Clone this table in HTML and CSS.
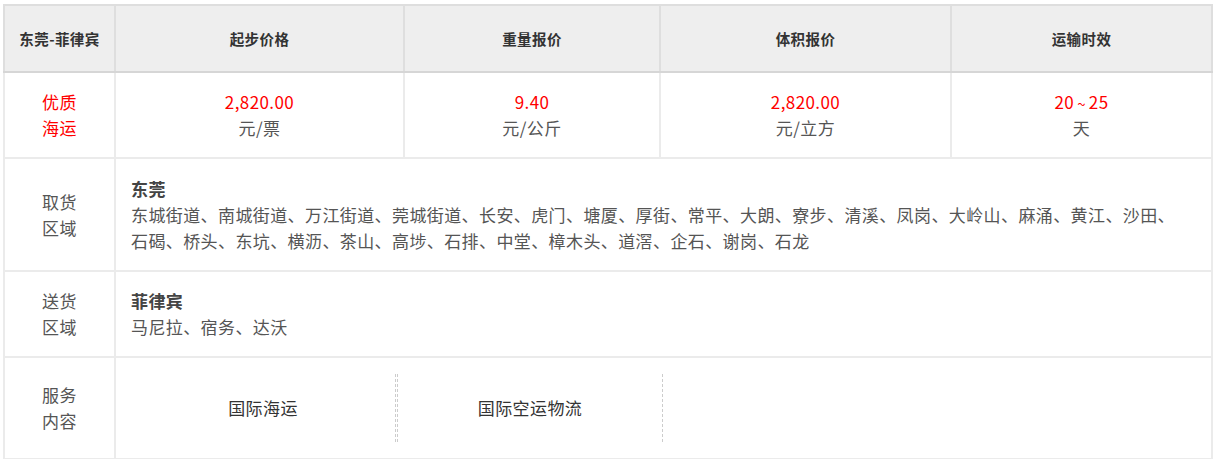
FILE: index.html
```html
<!DOCTYPE html>
<html lang="zh-CN">
<head>
<meta charset="utf-8">
<title>东莞-菲律宾</title>
<link rel="stylesheet" href="styles.css">
</head>
<body>
<table class="price-table">
  <colgroup>
    <col class="c1"><col class="c2"><col class="c3"><col class="c4"><col class="c5">
  </colgroup>
  <thead>
    <tr class="head-row">
      <th>东莞-菲律宾</th>
      <th>起步价格</th>
      <th>重量报价</th>
      <th>体积报价</th>
      <th>运输时效</th>
    </tr>
  </thead>
  <tbody>
    <tr class="price-row">
      <td class="label red">优质<br>海运</td>
      <td class="val"><span class="red">2,820.00</span><br>元/票</td>
      <td class="val"><span class="red">9.40</span><br>元/公斤</td>
      <td class="val"><span class="red">2,820.00</span><br>元/立方</td>
      <td class="val"><span class="red">20<span class="tilde">~</span>25</span><br>天</td>
    </tr>
    <tr class="area-row pick">
      <td class="label">取货<br>区域</td>
      <td class="area" colspan="4"><strong>东莞</strong><br>东城街道、南城街道、万江街道、莞城街道、长安、虎门、塘厦、厚街、常平、大朗、寮步、清溪、凤岗、大岭山、麻涌、黄江、沙田、石碣、桥头、东坑、横沥、茶山、高埗、石排、中堂、樟木头、道滘、企石、谢岗、石龙</td>
    </tr>
    <tr class="area-row send">
      <td class="label">送货<br>区域</td>
      <td class="area" colspan="4"><strong>菲律宾</strong><br>马尼拉、宿务、达沃</td>
    </tr>
    <tr class="svc-row">
      <td class="label">服务<br>内容</td>
      <td class="svc" colspan="4">
        <div class="svc-list">
          <div class="svc-item first">国际海运</div>
          <div class="svc-item second">国际空运物流</div>
        </div>
      </td>
    </tr>
  </tbody>
</table>
</body>
</html>
```

FILE: styles.css
```css
html, body {
  margin: 0;
  padding: 0;
  background: #fff;
}
body {
  font-family: "Noto Sans CJK SC", "Noto Sans", sans-serif;
  color: #555;
}
.price-table {
  margin: 4px 0 0 3px;
  width: 1208px;
  border-collapse: collapse;
  table-layout: fixed;
  border: 2px solid #ebebeb;
}
.c1 { width: 111px; }
.c2 { width: 289px; }
.c3 { width: 256px; }
.c4 { width: 291px; }
.c5 { width: 261px; }

.price-table th,
.price-table td {
  border: 2px solid #ebebeb;
  padding: 0;
  text-align: center;
  vertical-align: middle;
}
.head-row th {
  background: #eeeeee;
  border-color: #dedede;
  border-bottom-color: #d6d6d6;
  height: 65px;
  font-size: 14.5px;
  font-weight: bold;
  color: #333;
  letter-spacing: 0.4px;
}
.price-table td {
  font-size: 17px;
  line-height: 26px;
  letter-spacing: 0.4px;
}
.red { color: #ff0000; }
.tilde {
  display: inline-block;
  margin: 0 3px;
  font-size: 15px;
  line-height: 1;
  vertical-align: -1px;
}
.price-row td { height: 84px; }
.pick td { height: 111px; }
.send td { height: 84px; }
.svc-row td { height: 100px; }
.price-table td.area {
  text-align: left;
  padding: 0 30px 0 15px;
}
.area strong {
  font-weight: bold;
  color: #444;
}
.price-table td.svc {
  text-align: left;
  padding: 0 0 0 15px;
}
.svc-list {
  display: flex;
  align-items: center;
}
.svc-item {
  width: 264px;
  height: 68px;
  line-height: 68px;
  text-align: center;
  color: #333;
  border-right: 1px dashed #cccccc;
}
.svc-item.second {
  margin-left: 1px;
  border-left: 1px dashed #cccccc;
}
```
